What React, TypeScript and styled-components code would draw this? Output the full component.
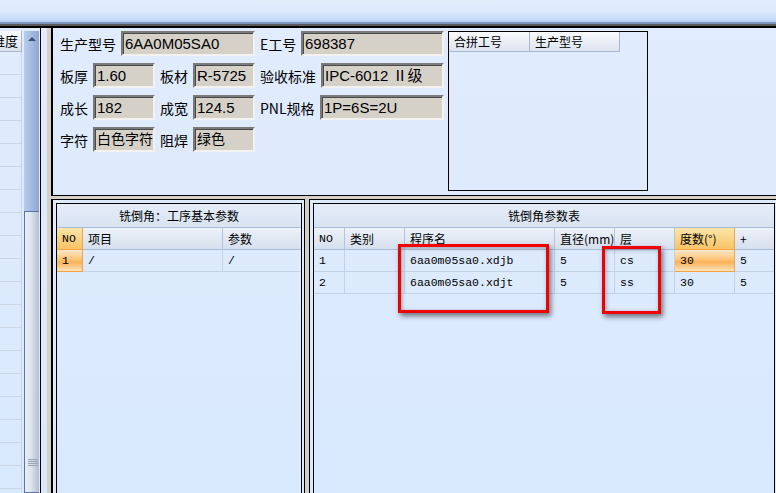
import React from "react";
import styled, { createGlobalStyle } from "styled-components";

const GlobalStyle = createGlobalStyle`
  *, *::before, *::after { box-sizing: border-box; }
  html, body { margin: 0; padding: 0; background: #dfebfc; }
  body { overflow: hidden; }
`;

const Screen = styled.div`
  position: relative;
  width: 776px;
  height: 493px;
  overflow: hidden;
  background: linear-gradient(#e1ecfd, #d9e9fd);
  font-family: "Noto Sans CJK SC", "Liberation Sans", sans-serif;
  color: #000;
`;

const TopStrip = styled.div`
  height: 28px;
  background: linear-gradient(
    to bottom,
    #e3eefd 0px,
    #dde9fc 11px,
    #cadef9 18px,
    #b5cff3 22px,
    #7f96bc 22px,
    #7f96bc 24px,
    #5a5a5a 24px,
    #5a5a5a 26px,
    #000 26px,
    #000 28px
  );
`;

const Body = styled.div`
  display: flex;
  height: 465px;
`;

/* left list with scrollbar */
const LeftPane = styled.div`
  width: 41px;
  flex-shrink: 0;
  display: flex;
  padding-top: 3px;
  border-right: 1px solid #000;
`;

const SideGrid = styled.div`
  width: 24px;
  display: flex;
  flex-direction: column;
  overflow: hidden;
`;

const SideHeader = styled.div`
  width: 22px;
  height: 21px;
  flex-shrink: 0;
  border-right: 1px solid #aab6c8;
  border-bottom: 1px solid #aab6c8;
  background: linear-gradient(#f7f9fc, #dce2eb);
  font-size: 13px;
  line-height: 20px;
  white-space: nowrap;
  overflow: hidden;
  text-indent: -8px;
`;

const SideRow = styled.div`
  width: 22px;
  height: 23px;
  flex-shrink: 0;
  border-right: 1px solid #cbd5e3;
  border-bottom: 1px solid #cbd5e3;
`;

const ScrollBar = styled.div`
  width: 15px;
  display: flex;
  flex-direction: column;
`;

const ScrollBtn = styled.div`
  height: 16px;
  background: linear-gradient(to right, #b9cdea, #8da8d1);
  display: flex;
  align-items: center;
  justify-content: center;
`;

const UpArrow = styled.div`
  width: 0;
  height: 0;
  border-left: 4px solid transparent;
  border-right: 4px solid transparent;
  border-bottom: 4px solid #3d5177;
`;

const ScrollTrack = styled.div`
  height: 164px;
  background: linear-gradient(to right, #b9cdea, #8da8d1);
`;

const ScrollThumb = styled.div`
  flex: 1;
  border: 1px solid #5b72a4;
  border-right: none;
  background: linear-gradient(to right, #e9edf3 0%, #dfe5ed 40%, #b2bfd4 100%);
  padding-top: 247px;
`;

const Grip = styled.div`
  width: 10px;
  height: 8px;
  margin-left: 3px;
  background: repeating-linear-gradient(
    to bottom,
    #98a2b2 0px,
    #98a2b2 1px,
    transparent 1px,
    transparent 2px
  );
`;

const Gap = styled.div`
  width: 6px;
  flex-shrink: 0;
`;

const Splitter = styled.div<{ $vertical?: boolean }>`
  flex-shrink: 0;
  background: #d4d0c8;
  ${(p) => (p.$vertical ? "width: 4px;" : "height: 3px;")}
`;

const RightArea = styled.div`
  width: 727px;
  flex-shrink: 0;
  display: flex;
  flex-direction: column;
`;

/* top info panel */
const InfoPanel = styled.div`
  height: 168px;
  flex-shrink: 0;
  display: flex;
  align-items: flex-start;
  padding: 3px 0 0 7px;
  border-left: 2px solid #000;
  border-bottom: 1px solid #000;
`;

const Form = styled.div`
  width: 384px;
  display: flex;
  flex-direction: column;
  gap: 7px;
`;

const FormRow = styled.div`
  display: flex;
  align-items: center;
  height: 25px;
`;

const Label = styled.div<{ $w: number; $gap?: number }>`
  width: ${(p) => p.$w}px;
  margin-left: ${(p) => p.$gap ?? 0}px;
  font-size: 14px;
  white-space: nowrap;
`;

const Field = styled.div<{ $w: number; $cjk?: boolean }>`
  width: ${(p) => p.$w}px;
  height: 25px;
  background: #d5d1c9;
  border: 2px solid;
  border-color: #7a7a7a #f4f2ee #f4f2ee #7a7a7a;
  box-shadow: inset 1px 1px 0 #4a4a4a;
  padding-left: 2px;
  font-family: "Liberation Sans", "Noto Sans CJK SC", sans-serif;
  font-size: ${(p) => (p.$cjk ? 14 : 15)}px;
  line-height: 21px;
  white-space: nowrap;
  overflow: hidden;
`;

const MergeGrid = styled.div`
  width: 200px;
  height: 160px;
  margin-left: 4px;
  border: 1px solid #000;
`;

const MergeHead = styled.div`
  display: flex;
  height: 20px;
`;

const MergeCell = styled.div<{ $w: number }>`
  width: ${(p) => p.$w}px;
  height: 20px;
  padding-left: 5px;
  border-right: 1px solid #a9b7cb;
  border-bottom: 1px solid #a9b7cb;
  background: linear-gradient(#f8fafd, #dde4ee);
  font-size: 12px;
  line-height: 19px;
  white-space: nowrap;
`;

/* bottom panels */
const BottomRow = styled.div`
  flex: 1;
  display: flex;
`;

const Panel = styled.div<{ $w: number; $thickLeft?: boolean }>`
  width: ${(p) => p.$w}px;
  flex-shrink: 0;
  display: flex;
  flex-direction: column;
  border-top: 1px solid #000;
  border-left: ${(p) => (p.$thickLeft ? 2 : 1)}px solid #000;
  border-right: 1px solid #000;
  padding: 3px 2px 0 3px;
`;

const GroupBox = styled.div`
  flex: 1;
  border: 1px solid #000;
  border-bottom: none;
  display: flex;
  flex-direction: column;
`;

const GroupTitle = styled.div`
  height: 24px;
  flex-shrink: 0;
  border-bottom: 1px solid #a8bcd8;
  background: linear-gradient(#e4ecf8, #d9e3f1);
  font-size: 12px;
  display: flex;
  align-items: center;
  justify-content: center;
`;

const Table = styled.div<{ $cols: string }>`
  display: grid;
  grid-template-columns: ${(p) => p.$cols};
`;

const Cell = styled.div<{ $head?: boolean; $hl?: boolean; $last?: boolean; $mono?: boolean }>`
  height: 22px;
  padding: 0 4px 0 5px;
  display: flex;
  align-items: center;
  white-space: nowrap;
  overflow: hidden;
  border-bottom: 1px solid ${(p) => (p.$hl ? "#f0a445" : p.$head ? "#a9bdd9" : "#c2d1e5")};
  border-right: ${(p) =>
    p.$last ? "none" : `1px solid ${p.$hl ? "#f0a445" : p.$head ? "#b2c3db" : "#c2d1e5"}`};
  font-family: ${(p) =>
    p.$mono
      ? `"Liberation Mono", "Noto Sans CJK SC", monospace`
      : `"Noto Sans CJK SC", "Liberation Sans", sans-serif`};
  font-size: ${(p) => (p.$mono ? "11.5px" : "12px")};
  background: ${(p) =>
    p.$hl && p.$head
      ? "linear-gradient(#fbe4a8, #f7c466)"
      : p.$hl
      ? "linear-gradient(#fde9c9 0%, #fcc67c 42%, #fbb259 58%, #fde3ba 100%)"
      : p.$head
      ? "linear-gradient(#edf2f9, #d6dfed)"
      : "transparent"};
`;

const Mark = styled.div<{ $x: number; $y: number; $w: number; $h: number }>`
  position: absolute;
  left: ${(p) => p.$x}px;
  top: ${(p) => p.$y}px;
  width: ${(p) => p.$w}px;
  height: ${(p) => p.$h}px;
  border: 3px solid #f20000;
  box-shadow: 2px 3px 5px rgba(0, 0, 0, 0.5), inset 1px 1px 4px rgba(0, 0, 0, 0.3);
  pointer-events: none;
`;

const millRows = [
  { no: "1", kind: "", name: "6aa0m05sa0.xdjb", dia: "5", layer: "cs", deg: "30", plus: "5" },
  { no: "2", kind: "", name: "6aa0m05sa0.xdjt", dia: "5", layer: "ss", deg: "30", plus: "5" },
];

export default function App() {
  return (
    <>
      <GlobalStyle />
      <Screen>
        <TopStrip />
        <Body>
          <LeftPane>
            <SideGrid>
              <SideHeader>难度</SideHeader>
              {Array.from({ length: 20 }).map((_, i) => (
                <SideRow key={i} />
              ))}
            </SideGrid>
            <ScrollBar>
              <ScrollBtn>
                <UpArrow />
              </ScrollBtn>
              <ScrollTrack />
              <ScrollThumb>
                <Grip />
              </ScrollThumb>
            </ScrollBar>
          </LeftPane>
          <Gap />
          <Splitter $vertical />
          <RightArea>
            <InfoPanel>
              <Form>
                <FormRow>
                  <Label $w={61}>生产型号</Label>
                  <Field $w={134}>6AA0M05SA0</Field>
                  <Label $w={41} $gap={5}>E工号</Label>
                  <Field $w={143}>698387</Field>
                </FormRow>
                <FormRow>
                  <Label $w={33}>板厚</Label>
                  <Field $w={62}>1.60</Field>
                  <Label $w={33} $gap={5}>板材</Label>
                  <Field $w={62}>R-5725</Field>
                  <Label $w={61} $gap={5}>验收标准</Label>
                  <Field $w={123}>IPC-6012 Ⅱ级</Field>
                </FormRow>
                <FormRow>
                  <Label $w={33}>成长</Label>
                  <Field $w={62}>182</Field>
                  <Label $w={33} $gap={5}>成宽</Label>
                  <Field $w={62}>124.5</Field>
                  <Label $w={60} $gap={5}>PNL规格</Label>
                  <Field $w={124}>1P=6S=2U</Field>
                </FormRow>
                <FormRow>
                  <Label $w={33}>字符</Label>
                  <Field $w={62} $cjk>白色字符</Field>
                  <Label $w={33} $gap={5}>阻焊</Label>
                  <Field $w={62} $cjk>绿色</Field>
                </FormRow>
              </Form>
              <MergeGrid>
                <MergeHead>
                  <MergeCell $w={81}>合拼工号</MergeCell>
                  <MergeCell $w={90}>生产型号</MergeCell>
                </MergeHead>
              </MergeGrid>
            </InfoPanel>
            <Splitter />
            <BottomRow>
              <Panel $w={254} $thickLeft>
                <GroupBox>
                  <GroupTitle>铣倒角：工序基本参数</GroupTitle>
                  <Table $cols="26px 140px 1fr">
                    <Cell $head $hl $mono>NO</Cell>
                    <Cell $head>项目</Cell>
                    <Cell $head $last>参数</Cell>
                    <Cell $hl $mono>1</Cell>
                    <Cell $mono>/</Cell>
                    <Cell $mono $last>/</Cell>
                  </Table>
                </GroupBox>
              </Panel>
              <Splitter $vertical />
              <Panel $w={469}>
                <GroupBox>
                  <GroupTitle>铣倒角参数表</GroupTitle>
                  <Table $cols="31px 60px 150px 60px 60px 60px 1fr">
                    <Cell $head $mono>NO</Cell>
                    <Cell $head>类别</Cell>
                    <Cell $head>程序名</Cell>
                    <Cell $head>直径(mm)</Cell>
                    <Cell $head>层</Cell>
                    <Cell $head $hl>度数(°)</Cell>
                    <Cell $head $last>+</Cell>
                    {millRows.map((r, i) => (
                      <React.Fragment key={r.no}>
                        <Cell $mono>{r.no}</Cell>
                        <Cell $mono>{r.kind}</Cell>
                        <Cell $mono>{r.name}</Cell>
                        <Cell $mono>{r.dia}</Cell>
                        <Cell $mono>{r.layer}</Cell>
                        <Cell $mono $hl={i === 0}>{r.deg}</Cell>
                        <Cell $mono $last>{r.plus}</Cell>
                      </React.Fragment>
                    ))}
                  </Table>
                </GroupBox>
              </Panel>
            </BottomRow>
          </RightArea>
        </Body>
        <Mark $x={398} $y={244} $w={151} $h={69} />
        <Mark $x={602} $y={246} $w={59} $h={68} />
      </Screen>
    </>
  );
}
